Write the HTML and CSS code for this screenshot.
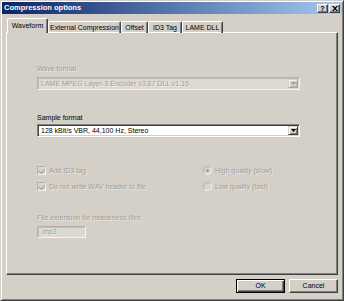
FILE: index.html
```html
<!DOCTYPE html>
<html>
<head>
<meta charset="utf-8">
<link rel="stylesheet" href="styles.css">
</head>
<body>
<div class="window">
  <div class="titlebar">
    <span class="title">Compression options</span>
    <div class="tbuttons">
      <span class="tbtn help">?</span>
      <span class="tbtn close"><svg width="6" height="5" viewBox="0 0 6 5"><path d="M0 0h1.5l1.5 1.6 1.5-1.6H6L3.8 2.5 6 5H4.5L3 3.4 1.5 5H0l2.2-2.5z" fill="#000"/></svg></span>
    </div>
  </div>
  <div class="client">
    <div class="tabs">
      <div class="tab selected t-wave">Waveform</div>
      <div class="tab t-ext">External Compression</div>
      <div class="tab t-off">Offset</div>
      <div class="tab t-id3">ID3 Tag</div>
      <div class="tab t-dll">LAME DLL</div>
    </div>
    <div class="panel">
      <div class="label disabled lbl-wave">Wave format</div>
      <div class="combo off combo-wave">
        <span class="ctext">LAME MPEG Layer-3 Encoder v3.87 DLL v1.16</span>
        <span class="dbtn"><svg width="5" height="3" viewBox="0 0 5 3"><path d="M0 0h5L2.5 3z" fill="#a09c94"/></svg></span>
      </div>
      <div class="label lbl-sample">Sample format</div>
      <div class="combo">
        <span class="ctext">128 kBit/s VBR, 44,100 Hz, Stereo</span>
        <span class="dbtn"><svg width="5" height="3" viewBox="0 0 5 3"><path d="M0 0h5L2.5 3z" fill="#000"/></svg></span>
      </div>
      <div class="opts">
        <div class="opt">
          <span class="check"><svg width="6" height="6" viewBox="0 0 7 7"><path d="M0 2.5l2.5 2.5L7 0.5V2.5L2.5 7 0 4.5z" fill="#a5a199"/></svg></span>
          <span class="disabled">Add ID3 tag</span>
        </div>
        <div class="opt">
          <span class="radio"><span class="dot"></span></span>
          <span class="disabled">High quality (slow)</span>
        </div>
        <div class="opt">
          <span class="check"><svg width="6" height="6" viewBox="0 0 7 7"><path d="M0 2.5l2.5 2.5L7 0.5V2.5L2.5 7 0 4.5z" fill="#a5a199"/></svg></span>
          <span class="disabled">Do not write WAV header to file</span>
        </div>
        <div class="opt">
          <span class="radio"></span>
          <span class="disabled">Low quality (fast)</span>
        </div>
      </div>
      <div class="label disabled lbl-ext">File extension for headerless files</div>
      <div class="edit"><span class="disabled">.mp3</span></div>
    </div>
    <div class="buttons">
      <div class="btn default"><span>OK</span></div>
      <div class="btn"><span>Cancel</span></div>
    </div>
  </div>
</div>
</body>
</html>
```

FILE: styles.css
```css
* { box-sizing: border-box; }
html, body {
  margin: 0;
  padding: 0;
  background: #d4d0c8;
}
body {
  width: 344px;
  height: 301px;
  font-family: "Liberation Sans", Arial, sans-serif;
  font-size: 7px;
  color: #000;
}
.window {
  width: 344px;
  height: 301px;
  border: 1px solid;
  border-color: #d4d0c8 #404040 #404040 #d4d0c8;
  box-shadow: inset 1px 1px 0 #fff, inset -1px -1px 0 #808080;
  padding: 1px;
  display: flex;
  flex-direction: column;
}
.titlebar {
  height: 12px;
  background: linear-gradient(to right, #0a246a, #a6caf0);
  display: flex;
  align-items: center;
  justify-content: space-between;
  padding: 0 2px 0 2px;
}
.title {
  color: #fff;
  font-weight: bold;
  font-size: 7.5px;
  line-height: 12px;
}
.tbuttons {
  display: flex;
  gap: 1px;
}
.tbtn {
  width: 11px;
  height: 9px;
  background: #d4d0c8;
  border: 1px solid;
  border-color: #fff #404040 #404040 #fff;
  box-shadow: inset -1px -1px 0 #808080;
  display: flex;
  align-items: center;
  justify-content: center;
  font-size: 7px;
  font-weight: bold;
  line-height: 7px;
}
.client {
  flex: 1;
  display: flex;
  flex-direction: column;
  padding: 4px 4px 0 4px;
}
.tabs {
  display: flex;
  align-items: flex-end;
  height: 15px;
  margin-bottom: -1px;
  padding-left: 1px;
  position: relative;
  z-index: 1;
}
.tab {
  height: 12px;
  line-height: 11px;
  border-top: 1px solid #fff;
  border-left: 1px solid #fff;
  border-right: 1px solid #404040;
  box-shadow: inset -1px 0 0 #808080;
  border-radius: 2px 2px 0 0;
  white-space: nowrap;
  text-align: center;
}
.t-wave { width: 41px; }
.t-ext { width: 73px; }
.t-off { width: 27px; }
.t-id3 { width: 34px; }
.t-dll { width: 41px; }
.tab.selected {
  height: 15px;
  line-height: 13px;
  background: #d4d0c8;
}
.panel {
  height: 243px;
  border: 1px solid;
  border-color: #fff #404040 #404040 #fff;
  box-shadow: inset -1px -1px 0 #808080;
  padding: 0 37px 0 30px;
  display: flex;
  flex-direction: column;
  align-items: stretch;
}
.label {
  line-height: 9px;
  height: 9px;
}
.disabled {
  color: #a29e96;
  text-shadow: 1px 1px 0 rgba(255,255,255,0.55);
}
.lbl-wave { margin-top: 31px; margin-bottom: 4px; }
.lbl-sample { margin-top: 23px; margin-bottom: 2px; }
.combo {
  height: 13px;
  border: 1px solid;
  border-color: #808080 #fff #fff #808080;
  box-shadow: inset 1px 1px 0 #404040, inset -1px -1px 0 #d4d0c8;
  background: #fff;
  display: flex;
  align-items: center;
  padding: 1px 1px 1px 2px;
}
.combo.off {
  background: #dcd9d2;
  border-color: #b4b0a8 #f4f3f0 #f4f3f0 #b4b0a8;
  box-shadow: inset 1px 1px 0 #c4c0b8;
}
.ctext {
  flex: 1;
  line-height: 9px;
  padding-left: 1px;
  white-space: nowrap;
  overflow: hidden;
}
.combo.off .ctext {
  color: #a29e96;
  text-shadow: 1px 1px 0 rgba(255,255,255,0.55);
}
.dbtn {
  width: 10px;
  height: 9px;
  background: #d4d0c8;
  border: 1px solid;
  border-color: #d4d0c8 #404040 #404040 #d4d0c8;
  box-shadow: inset 1px 1px 0 #fff, inset -1px -1px 0 #808080;
  display: flex;
  align-items: center;
  justify-content: center;
}
.combo.off .dbtn {
  border-color: #d4d0c8 #a8a49c #a8a49c #d4d0c8;
  box-shadow: inset 1px 1px 0 #f4f3f0, inset -1px -1px 0 #bcb8b0;
}
.opts {
  margin-top: 29px;
  display: grid;
  grid-template-columns: 166px 1fr;
  row-gap: 7px;
}
.opt {
  display: flex;
  align-items: center;
  height: 9px;
  line-height: 9px;
  white-space: nowrap;
}
.check {
  width: 9px;
  height: 9px;
  margin-right: 3px;
  border: 1px solid;
  border-color: #b4b0a8 #f0efec #f0efec #b4b0a8;
  background: #d8d5ce;
  display: flex;
  align-items: center;
  justify-content: center;
}
.radio {
  width: 9px;
  height: 9px;
  margin-right: 3px;
  border-radius: 50%;
  border: 1px solid;
  border-color: #b4b0a8 #f0efec #f0efec #b4b0a8;
  background: #d8d5ce;
  display: flex;
  align-items: center;
  justify-content: center;
}
.dot {
  width: 3px;
  height: 3px;
  border-radius: 50%;
  background: #a29e96;
}
.lbl-ext { margin-top: 22px; margin-bottom: 4px; }
.edit {
  width: 49px;
  height: 12px;
  border: 1px solid;
  border-color: #b4b0a8 #f4f3f0 #f4f3f0 #b4b0a8;
  box-shadow: inset 1px 1px 0 #c4c0b8;
  background: #dcd9d2;
  line-height: 10px;
  padding-left: 3px;
}
.buttons {
  display: flex;
  justify-content: flex-end;
  gap: 4px;
  margin-top: 4px;
}
.btn {
  width: 49px;
  height: 14px;
  border: 1px solid;
  border-color: #fff #404040 #404040 #fff;
  box-shadow: inset -1px -1px 0 #808080;
  display: flex;
  align-items: center;
  justify-content: center;
  line-height: 10px;
}
.btn.default {
  border: 1px solid #000;
  box-shadow: inset 1px 1px 0 #fff, inset -1px -1px 0 #404040, inset -2px -2px 0 #808080;
}
```
